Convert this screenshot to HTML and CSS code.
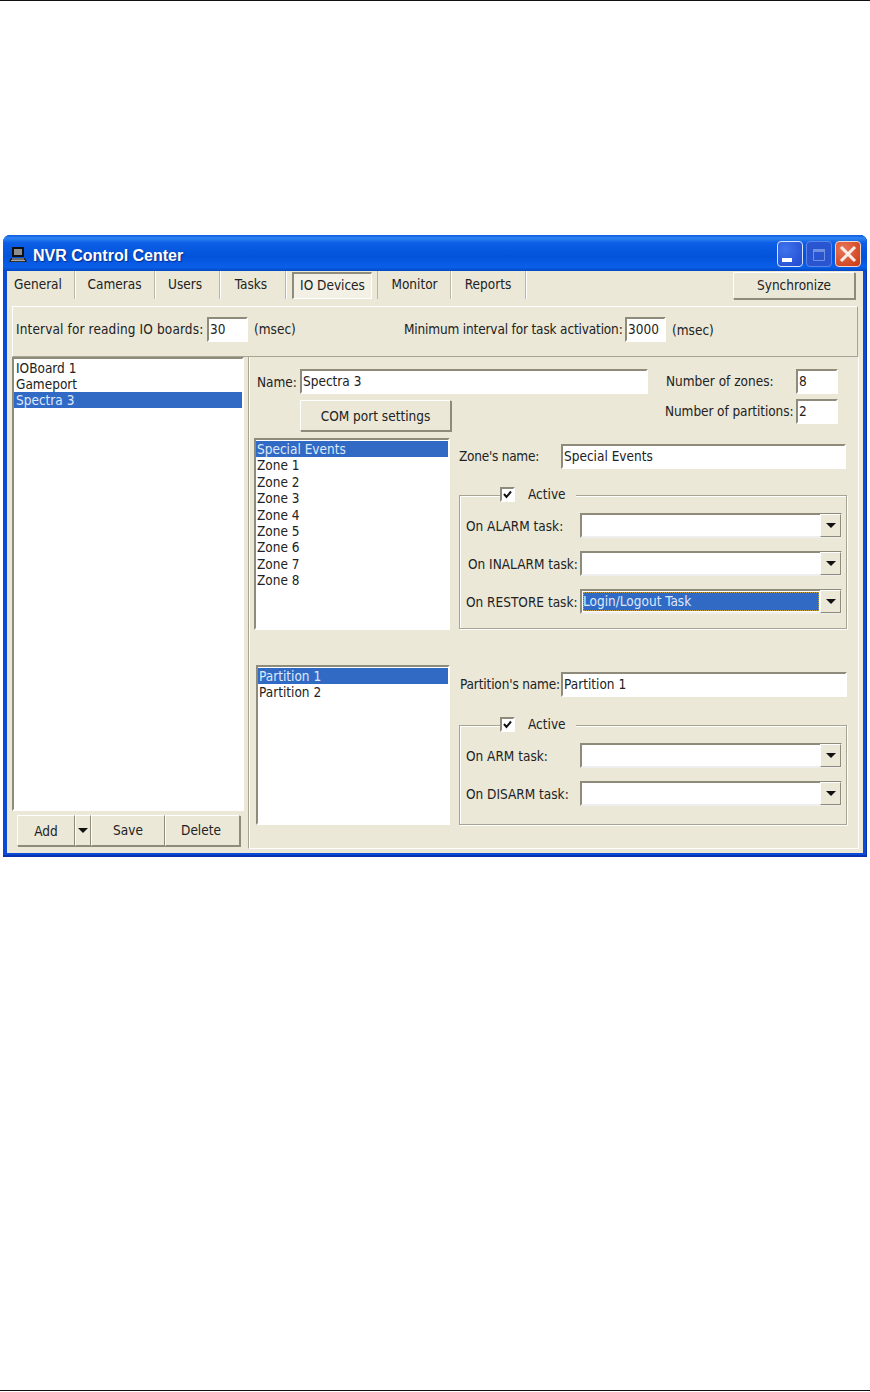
FILE: index.html
```html
<!DOCTYPE html>
<html lang="en">
<head>
<meta charset="utf-8">
<title>NVR Control Center</title>
<link rel="stylesheet" href="styles.css">
</head>
<body>
<div class="page">
  <div class="window">
    <div class="titlebar">
      <svg class="app-icon" width="20" height="18" viewBox="0 0 20 18">
        <path d="M4 1h12v10H4z" fill="#111"/>
        <path d="M6 3h8v6H6z" fill="#8f8f8f"/>
        <path d="M3 12h14l2 4H1z" fill="#222"/>
        <path d="M4 13h12M3 14.600h14" stroke="#ddd" stroke-width=".8"/>
      </svg>
      <span class="title">NVR Control Center</span>
      <div class="winbtns">
        <div class="winbtn min"><svg width="24" height="24" viewBox="0 0 24 24"><rect x="4" y="16" width="10" height="4" fill="#fff"/></svg></div>
        <div class="winbtn max"><svg width="24" height="24" viewBox="0 0 24 24"><path d="M6.500 7.500h11v11h-11z" fill="none" stroke="#6f8fe0"/><path d="M6 7h12v3H6z" fill="#6f8fe0"/></svg></div>
        <div class="winbtn close"><svg width="24" height="24" viewBox="0 0 24 24"><path d="M5 5l14 14M19 5L5 19" stroke="#fbeee8" stroke-width="3"/></svg></div>
      </div>
    </div>
    <div class="client">
      <div class="tabrow">
        <div class="tab t1">General</div>
        <div class="tab t2">Cameras</div>
        <div class="tab t3">Users</div>
        <div class="tab t4">Tasks</div>
        <div class="tab active">IO Devices</div>
        <div class="tab t6">Monitor</div>
        <div class="tab t7">Reports</div>
        <button class="btn sync">Synchronize</button>
      </div>
      <div class="intervals">
        <span class="lbl int-lbl">Interval for reading IO boards:</span>
        <div class="edit e-int">30</div>
        <span class="lbl msec">(msec)</span>
        <span class="lbl min-lbl">Minimum interval for task activation:</span>
        <div class="edit e-int">3000</div>
        <span class="lbl">(msec)</span>
      </div>
      <div class="main">
        <div class="left">
          <div class="list boards">
            <div class="item">IOBoard 1</div>
            <div class="item">Gameport</div>
            <div class="item sel">Spectra 3</div>
          </div>
          <div class="toolbar">
            <button class="btn add">Add</button>
            <button class="btn arrow"><span class="caret"></span></button>
            <button class="btn save">Save</button>
            <button class="btn del">Delete</button>
          </div>
        </div>
        <div class="right">
          <div class="head">
            <div class="head-left">
              <div class="name-row">
                <span class="lbl name-lbl">Name:</span>
                <div class="edit e-name">Spectra 3</div>
              </div>
              <button class="btn com">COM port settings</button>
            </div>
            <div class="counts">
              <div class="count-row"><span class="lbl zones-lbl">Number of zones:</span><div class="edit e-num">8</div></div>
              <div class="count-row"><span class="lbl parts-lbl">Number of partitions:</span><div class="edit e-num">2</div></div>
            </div>
          </div>

          <div class="split zones">
            <div class="list zone-list">
              <div class="item sel">Special Events</div>
              <div class="item">Zone 1</div>
              <div class="item">Zone 2</div>
              <div class="item">Zone 3</div>
              <div class="item">Zone 4</div>
              <div class="item">Zone 5</div>
              <div class="item">Zone 6</div>
              <div class="item">Zone 7</div>
              <div class="item">Zone 8</div>
            </div>
            <div class="detail">
              <div class="detail-name">
                <span class="lbl dn-lbl">Zone's name:</span>
                <div class="edit e-detail">Special Events</div>
              </div>
              <div class="group g-zone">
                <div class="legend"><span class="check"><svg width="11" height="11" viewBox="0 0 11 11"><path d="M2 5l2.500 3L9 2.500" fill="none" stroke="#111" stroke-width="2"/></svg></span><span class="lbl">Active</span></div>
                <div class="task"><span class="lbl">On ALARM task:</span><div class="combo"><div class="combo-val"></div><span class="combo-btn"><span class="caret"></span></span></div></div>
                <div class="task"><span class="lbl indent">On INALARM task:</span><div class="combo"><div class="combo-val"></div><span class="combo-btn"><span class="caret"></span></span></div></div>
                <div class="task"><span class="lbl">On RESTORE task:</span><div class="combo"><div class="combo-val focus">Login/Logout Task</div><span class="combo-btn"><span class="caret"></span></span></div></div>
              </div>
            </div>
          </div>

          <div class="split partitions">
            <div class="list part-list">
              <div class="item sel">Partition 1</div>
              <div class="item">Partition 2</div>
            </div>
            <div class="detail">
              <div class="detail-name">
                <span class="lbl dn-lbl part">Partition's name:</span>
                <div class="edit e-detail">Partition 1</div>
              </div>
              <div class="group g-part">
                <div class="legend"><span class="check"><svg width="11" height="11" viewBox="0 0 11 11"><path d="M2 5l2.500 3L9 2.500" fill="none" stroke="#111" stroke-width="2"/></svg></span><span class="lbl">Active</span></div>
                <div class="task"><span class="lbl">On ARM task:</span><div class="combo"><div class="combo-val"></div><span class="combo-btn"><span class="caret"></span></span></div></div>
                <div class="task"><span class="lbl">On DISARM task:</span><div class="combo"><div class="combo-val"></div><span class="combo-btn"><span class="caret"></span></span></div></div>
              </div>
            </div>
          </div>
        </div>
      </div>
    </div>
  </div>
</div>
</body>
</html>
```

FILE: styles.css
```css
* { box-sizing: border-box; }
html, body { margin: 0; padding: 0; background: #fff; }
body { font-family: "DejaVu Sans Condensed", "DejaVu Sans", sans-serif; font-stretch: condensed; font-size: 13.500px; color: #222; }
.page {
  height: 1392px;
  padding: 235px 3px 0 3px;
  border-top: 1px solid #111;
  position: relative;
}
.page::after { content: ""; position: absolute; left: 0; right: 0; top: 1389px; height: 1px; background: #111; }
.window {
  width: 864px;
  height: 622px;
  margin-top: -1px;
  background: #0a4ad4;
  border-radius: 7px 7px 0 0;
  padding: 0 4px 4px 4px;
  display: flex;
  flex-direction: column;
  box-shadow: inset 0 -2px 0 #0733b0, inset -1px 0 0 #0733b0;
}
.titlebar {
  height: 36px;
  margin: 0 -4px;
  padding: 1px 6px 0 5px;
  border-radius: 7px 7px 0 0;
  background: linear-gradient(#0a5ae0 0, #2f83f0 3px, #0b5fe6 8px, #0352da 22px, #0a60ea 32px, #0448c4 36px);
  display: flex;
  align-items: center;
  color: #fff;
}
.app-icon { flex: none; margin: 3px 5px 0 0; }
.title { font-family: "Liberation Sans", Arial, sans-serif; font-stretch: normal; font-weight: 700; font-size: 16px; margin-top: 4px; text-shadow: 1px 1px 1px #0a2c8c; }
.winbtns { margin-left: auto; display: flex; gap: 3px; }
.winbtn { width: 26px; height: 26px; border-radius: 4px; border: 1px solid #d8e4fb; display: flex; align-items: center; justify-content: center; }
.winbtn.min { background: radial-gradient(circle at 30% 30%, #3f74ec, #2a55d8 70%, #2449c4); }
.winbtn.max { background: #2a55d0; border-color: #5f86e4; }
.winbtn.close { background: radial-gradient(circle at 30% 30%, #e8775a, #d34a25 70%, #c43a18); border-color: #f3d6cc; }
.client {
  flex: 1;
  background: #ebe8d8;
  display: flex;
  flex-direction: column;
  min-height: 0;
}
.lbl { white-space: nowrap; color: #222; }
.tabrow { height: 33px; display: flex; align-items: flex-start; position: relative; }
.tab { height: 28px; line-height: 26px; text-align: center; border-right: 1px solid #b9b6a6; box-shadow: 1px 0 0 #fff; flex: none; }
.t1 { width: 68px; padding-right: 5px; } .t2 { width: 80px; } .t3 { width: 65px; padding-right: 4px; } .t4 { width: 66px; padding-right: 3px; }
.t6 { width: 74px; border-left: 1px solid #b9b6a6; padding-left: 1px; } .t7 { width: 75px; }
.tab.active { width: 80px; height: 27px; margin: 1px 5px 0 6px; line-height: 23px; background: #f3f1e6; border: 1px solid; border-color: #8f8c7c #fff #fff #8f8c7c; border-top-width: 2px; border-left-width: 2px; box-shadow: none; }
.btn {
  font-family: inherit;
  font-stretch: inherit;
  font-size: 13.500px;
  color: #222;
  background: #ebe8d8;
  border: 1px solid;
  border-color: #fff #8e8b7b #8e8b7b #fff;
  box-shadow: 1px 1px 0 #8e8b7b;
  padding: 0;
}
.sync { width: 122px; height: 27px; position: absolute; right: 8px; top: 1px; padding-bottom: 2px; }
.intervals {
  height: 51px;
  margin: 2px 0 0 5px;
  width: 846px;
  border: 1px solid;
  border-color: #fff #a7a494 #a7a494 #fff;
  display: flex;
  align-items: center;
  padding: 0 0 4px 3px;
}
.edit {
  background: #fff;
  border: 2px solid;
  border-color: #8e8b7b #fff #fff #8e8b7b;
  height: 25px;
  line-height: 21px;
  padding-left: 1px;
  flex: none;
}
.e-int { width: 41px; margin: 0 6px 0 4px; }
.int-lbl { width: 187px; letter-spacing: .13px; padding-bottom: 1px; }
.msec { width: 42px; padding-bottom: 1px; }
.min-lbl { width: 217px; margin-left: 108px; letter-spacing: -.16px; padding-bottom: 1px; }
.main { flex: 1; display: flex; min-height: 0; margin: 0 4px 4px 0; }
.left { width: 237px; flex: none; padding: 0 0 0 5px; display: flex; flex-direction: column; }
.list { background: #fff; border: 2px solid; border-color: #8e8b7b #fff #fff #8e8b7b; color: #222; }
.item { height: 16.400px; line-height: 16px; padding-left: 1px; white-space: nowrap; }
.item.sel { background: #316ac5; color: #dfe8fa; }
.boards { height: 454px; padding-top: 1px; }
.boards .item { height: 16px; padding-left: 2px; }
.toolbar { display: flex; height: 33px; margin: 4px 0 0 5px; }
.toolbar .btn { height: 31px; }
.add { width: 58px; }
.arrow { width: 16px; display: flex; align-items: center; justify-content: center; }
.toolbar .save { width: 74px; padding-bottom: 2px; }
.toolbar .del { width: 75px; padding: 0 3px 2px 0; }
.caret { display: block; width: 0; height: 0; border-left: 5px solid transparent; border-right: 5px solid transparent; border-top: 5px solid #111; }
.right { flex: 1; margin-left: 4px; border: 1px solid #fff; border-left-color: #a7a494; border-top: 0; box-shadow: inset 1px 0 0 #fff; padding: 12px 0 0 5px; min-width: 0; }
.head { display: flex; height: 69px; }
.head-left { width: 411px; flex: none; }
.name-row { display: flex; align-items: center; }
.name-lbl { margin-left: 3px; width: 43px; flex: none; }
.e-name { width: 348px; }
.com { display: block; width: 151px; height: 31px; margin: 6px 0 0 46px; }
.counts { display: flex; flex-direction: column; gap: 5px; width: 173px; }
.count-row { display: flex; align-items: center; justify-content: space-between; height: 25px; }
.zones-lbl { margin-left: 1px; padding-bottom: 2px; }
.parts-lbl { padding-bottom: 2px; letter-spacing: -.08px; }
.e-num { width: 42px; }
.split { display: flex; }
.zones { height: 192px; }
.partitions { height: 160px; margin-top: 35px; }
.zone-list { width: 196px; height: 192px; flex: none; padding-top: 1px; }
.part-list { width: 194px; height: 160px; flex: none; margin-left: 2px; padding-top: 1px; }
.detail { margin-left: 9px; width: 388px; flex: none; }
.detail-name { display: flex; align-items: center; height: 25px; margin-top: 6px; }
.partitions .detail-name { margin-top: 7px; }
.dn-lbl { width: 102px; flex: none; padding-bottom: 2px; letter-spacing: -.25px; }
.dn-lbl.part { padding-left: 1px; letter-spacing: -.15px; }
.e-detail { width: 285px; }
.partitions .e-detail { width: 286px; }
.group { position: relative; border: 1px solid #a7a494; box-shadow: inset 1px 1px 0 #fff, 1px 1px 0 #fff; margin-top: 26px; padding: 17px 0 0 6px; }
.g-zone { height: 134px; }
.g-part { height: 100px; }
.partitions .group { margin-top: 28px; }
.legend { position: absolute; left: 40px; top: -10px; background: #ebe8d8; display: flex; align-items: center; padding-right: 10px; gap: 13px; height: 16px; }
.check { width: 15px; height: 15px; background: #fff; border: 2px solid; border-color: #8e8b7b #fff #fff #8e8b7b; display: block; }
.check svg { display: block; }
.task { display: flex; align-items: center; height: 25px; margin-bottom: 13px; }
.task .lbl { width: 114px; flex: none; }
.task .lbl.indent { padding-left: 2px; }
.combo { flex: 1; margin-right: 4px; height: 25px; background: #fff; border: 2px solid; border-color: #8e8b7b #eee #eee #8e8b7b; display: flex; padding: 1px 0 1px 1px; }
.combo-val { flex: 1; height: 100%; line-height: 19px; }
.combo-val.focus { background: #316ac5; color: #dfe8fa; outline: 1px dotted #c8a040; outline-offset: -1px; }
.combo-btn { width: 21px; margin: -2px -1px -2px 1px; background: #ebe8d8; border: 1px solid; border-color: #fff #8e8b7b #8e8b7b #fff; display: flex; align-items: center; justify-content: center; flex: none; }
```
